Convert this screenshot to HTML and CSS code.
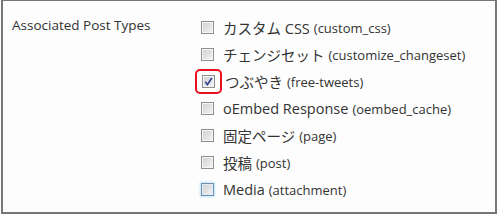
FILE: index.html
```html
<!DOCTYPE html>
<html lang="en">
<head>
    <meta charset="UTF-8">
    <title>Associated Post Types</title>
    <link rel="stylesheet" href="styles.css">
</head>
<body>
    <div class="frame">
        <div class="setting">
            <div class="setting-label">Associated Post Types</div>
            <ul class="types">
                <li><span class="box"></span>カスタム CSS <small>(custom_css)</small></li>
                <li><span class="box"></span>チェンジセット <small>(customize_changeset)</small></li>
                <li class="marked"><span class="ring"><span class="box checked"><svg viewBox="0 0 9 9" width="9" height="9"><path d="M1.2 4.6 L3.4 7.6 L7.8 1" fill="none" stroke="#2b3f93" stroke-width="1.6"/></svg></span></span>つぶやき <small>(free-tweets)</small></li>
                <li><span class="box"></span>oEmbed Response <small>(oembed_cache)</small></li>
                <li><span class="box"></span>固定ページ <small>(page)</small></li>
                <li><span class="box"></span>投稿 <small>(post)</small></li>
                <li><span class="box hover"></span>Media <small>(attachment)</small></li>
            </ul>
        </div>
    </div>
</body>
</html>
```

FILE: styles.css
```css
body {
    margin: 0;
    background: #fff;
    font-family: "Open Sans", "Noto Sans CJK JP", sans-serif;
    color: #333;
}
.frame {
    margin-left: 1px;
    width: 492px;
    height: 211px;
    border: 2px solid #767676;
    border-top-width: 1px;
    background: #fdfdfd;
}
.setting {
    display: flex;
    padding: 13px 0 0 9px;
}
.setting-label {
    width: 189px;
    font-size: 13.5px;
    line-height: 26px;
    margin-top: -2px;
}
.types {
    list-style: none;
    margin: 0;
    padding: 0;
}
.types li {
    display: flex;
    align-items: center;
    height: 27px;
    font-size: 14.5px;
    white-space: nowrap;
}
.types small {
    font-size: 13px;
    margin-left: 4px;
}
.box {
    width: 11px;
    height: 11px;
    border: 1px solid #8f8f8f;
    background: linear-gradient(135deg, #cfcfcf, #f4f4f4);
    box-shadow: inset 0 0 0 1px #f6f6f6;
    margin-right: 9px;
    display: flex;
    align-items: center;
    justify-content: center;
}
.box.hover {
    border-color: #6f8fb0;
    box-shadow: inset 0 0 0 1px #dceefa, 0 0 2px 1px #c4e3f7;
}
.ring {
    margin-left: -6px;
    margin-right: 3px;
    padding: 4px 5px;
    border: 2px solid #e8101b;
    border-radius: 5px;
    display: flex;
}
.ring .box {
    margin-right: 0;
}
```
